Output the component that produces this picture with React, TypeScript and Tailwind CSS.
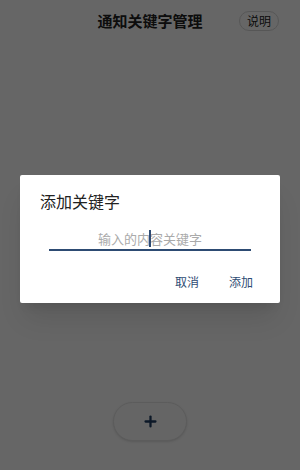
import { Plus } from 'lucide-react'

const font = { fontFamily: '"Noto Sans CJK SC", "Noto Sans", sans-serif' }

export default function App() {
  return (
    <div className="relative w-[300px] h-[470px] bg-white overflow-hidden" style={font}>
      <div className="relative flex items-center justify-center h-[41px]">
        <h1 className="text-[15px] font-bold text-[#222] leading-none">通知关键字管理</h1>
        <button className="absolute left-[239px] top-[11px] w-[40px] h-[20px] rounded-full border border-[#d8d8d8] text-[12px] leading-none text-[#222] flex items-center justify-center">
          说明
        </button>
      </div>
      <div className="absolute left-[113px] top-[402px] w-[74px] h-[39px] rounded-full border border-[#e6e6e6] bg-[#fdfdfd] shadow-sm flex items-center justify-center">
        <Plus className="w-[17px] h-[17px] text-[#1f3d63]" strokeWidth={3.2} />
      </div>

      <div className="absolute inset-0 bg-black/60 flex items-start justify-center">
        <div className="mt-[175px] w-[260px] h-[128px] bg-white rounded-[2px] shadow-xl flex flex-col">
          <div className="pl-[20px] pt-[15px] text-[16px] leading-[22px] text-[#222]">添加关键字</div>
          <div className="mx-[29px] mt-[15px] h-[24px] border-b-2 border-[#2d4b73] flex items-center justify-center relative">
            <span className="text-[13px] text-[#aaaaaa] leading-none">输入的内容关键字</span>
            <span className="absolute left-[100px] top-[3px] w-[2px] h-[17px] bg-[#2d4b73]" />
          </div>
          <div className="mt-auto mb-[15px] flex justify-end gap-[30px] pr-[27px] text-[12px] text-[#2d4b73] leading-none">
            <span>取消</span>
            <span>添加</span>
          </div>
        </div>
      </div>
    </div>
  )
}
